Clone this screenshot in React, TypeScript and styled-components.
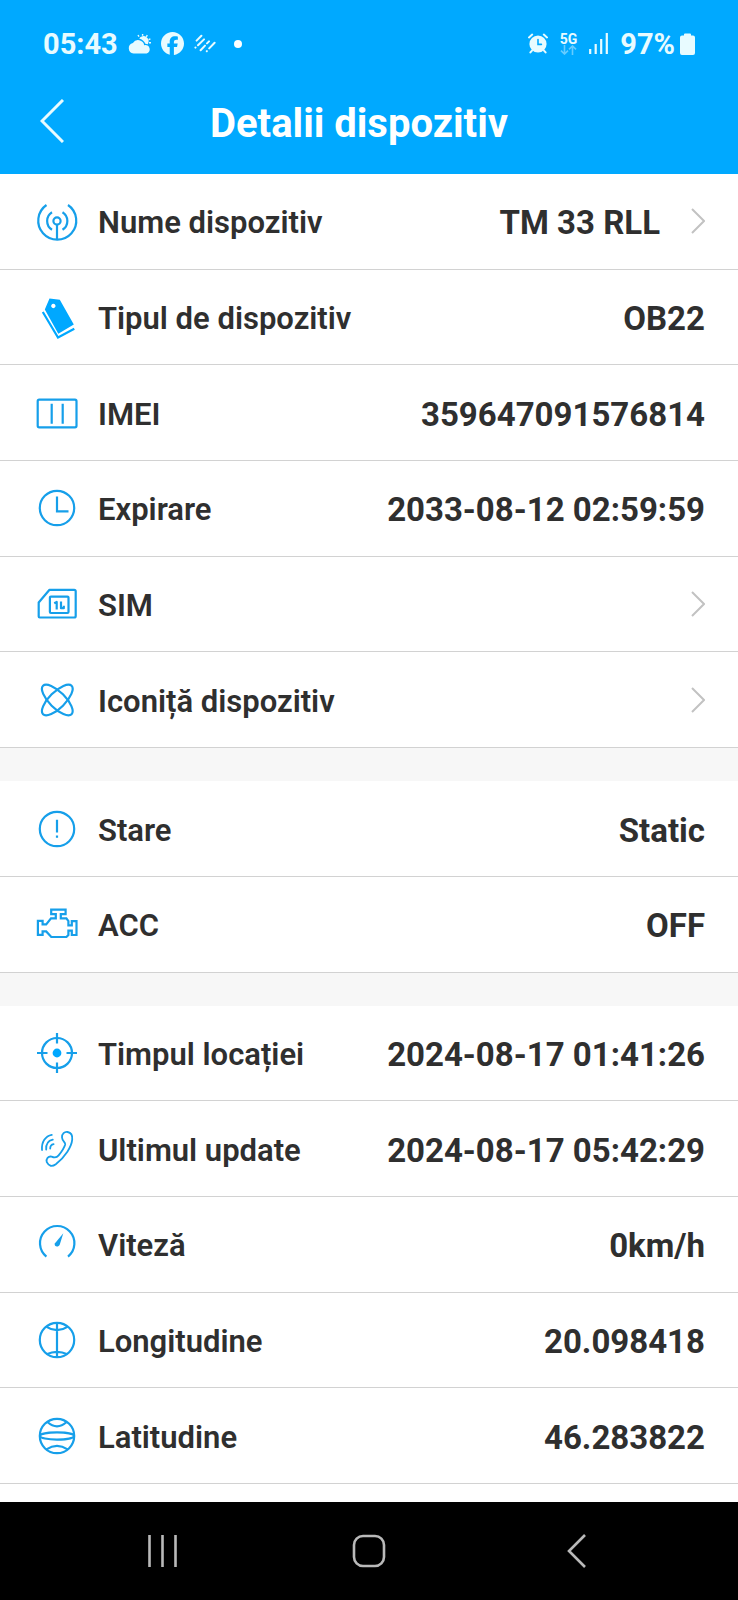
import React from "react";
import styled, { createGlobalStyle, css } from "styled-components";

const GlobalStyle = createGlobalStyle`
  *, *::before, *::after { box-sizing: border-box; }
  body {
    margin: 0;
    background: #ffffff;
    color: #2f2f2f;
    font-family: Roboto, "Noto Sans", sans-serif;
  }
  button { font: inherit; color: inherit; background: none; border: 0; padding: 0; cursor: pointer; }
`;

const Screen = styled.div`
  display: flex;
  flex-direction: column;
  min-height: 100vh;
`;

const Header = styled.header`
  background: #00a9ff;
  color: #ffffff;
`;

const StatusBar = styled.div`
  display: flex;
  align-items: center;
  justify-content: space-between;
  height: 72px;
  padding: 15px 43px 0;
`;

const StatusGroup = styled.div<{ $gap: number }>`
  display: flex;
  align-items: center;
  gap: ${(p) => p.$gap}px;
  color: #e8fbff;
`;

const StatusText = styled.span`
  font-size: 29px;
  line-height: 32px;
  font-weight: 700;
`;

const Network = styled.span`
  display: flex;
  flex-direction: column;
  align-items: center;
  font-size: 14px;
  line-height: 12px;
  font-weight: 700;
`;

const Battery = styled.span`
  display: flex;
  align-items: center;
  gap: 5px;
`;

const TitleBar = styled.div`
  display: flex;
  align-items: center;
  height: 102px;
`;

const BackButton = styled.button`
  display: flex;
  justify-content: center;
  flex: 0 0 104px;
  padding-bottom: 4px;
`;

const Title = styled.h1`
  flex: 1;
  margin: 0;
  padding: 2px 124px 0 0;
  text-align: center;
  font-size: 40px;
  line-height: 48px;
  font-weight: 700;
  white-space: nowrap;
`;

const Main = styled.main`
  display: flex;
  flex-direction: column;
  flex: 1;
  gap: 33px;
  padding-bottom: 18px;
  background: linear-gradient(to top, #ffffff 18px, #f7f7f7 18px);
`;

const Section = styled.ul<{ $rows: number }>`
  display: flex;
  flex-direction: column;
  flex: ${(p) => p.$rows} 0 auto;
  margin: 0;
  padding: 0;
  list-style: none;
  background: #ffffff;
`;

const Item = styled.li`
  display: flex;
  flex: 1 0 95px;
  border-bottom: 1px solid #d2d2d2;
`;

const rowStyle = css`
  display: flex;
  align-items: center;
  width: 100%;
  padding: 0 33px 0 37px;
`;

const Row = styled.div`
  ${rowStyle}
`;

const RowButton = styled.button`
  && { ${rowStyle} }
  text-align: left;
`;

const RowIcon = styled.svg`
  flex: none;
  width: 40px;
  height: 40px;
  overflow: visible;
  fill: none;
  stroke: #169fea;
  stroke-width: 2.2;
  stroke-linejoin: round;
`;

const Label = styled.span`
  flex: 1;
  margin-left: 21px;
  padding-top: 4px;
  font-size: 31px;
  line-height: 36px;
  font-weight: 600;
  white-space: nowrap;
`;

const Value = styled.span`
  padding-top: 4px;
  font-size: 33px;
  line-height: 40px;
  font-weight: 700;
  white-space: nowrap;
`;

const Chevron = styled.svg`
  flex: none;
  width: 14px;
  height: 26px;
  margin-left: 31px;
  fill: none;
  stroke: #c2c2c2;
  stroke-width: 2;
`;

const NavBar = styled.nav`
  display: flex;
  justify-content: center;
  height: 98px;
  background: #000000;
`;

const NavButton = styled.button`
  display: flex;
  align-items: center;
  justify-content: center;
  flex: 0 0 28%;
`;

const NavIcon = styled.svg`
  width: 34px;
  height: 34px;
  fill: none;
  stroke: #b9b9b9;
  stroke-width: 2.6;
`;

const icons: Record<string, React.ReactNode> = {
  antenna: (
    <>
      <path d="M9.5 4A19 19 0 1 0 31 4" />
      <path d="M15 11.2A10.4 10.4 0 0 0 15 28.8M25.5 11.2A10.4 10.4 0 0 1 25.5 28.8" />
      <circle cx="20" cy="20" r="3.6" />
      <path d="M20 23.6V38" />
    </>
  ),
  tag: (
    <>
      <path
        d="M12.5 1.5 22.8 2.8 36.8 27.6 21.3 36.8 7.8 12.6ZM16.3 6.8a2.2 2.2 0 1 0 .1 0Z"
        fill="#00a8ff"
        fillRule="evenodd"
        stroke="none"
      />
      <path d="M5.8 15 21 40.5 37.3 31.8" strokeLinejoin="miter" stroke="#00a8ff" />
    </>
  ),
  imei: (
    <>
      <rect x="0.7" y="6.7" width="38.8" height="27.6" rx="1.5" />
      <path d="M14.7 10.7V30.7M25.7 10.7V30.7" />
    </>
  ),
  clock: (
    <>
      <circle cx="20" cy="20" r="17.2" />
      <path d="M20 8.5V23.4H31.5" strokeLinejoin="miter" />
    </>
  ),
  sim: (
    <>
      <path d="M1.7 32.5V18.5L12.5 5.8H37.2Q38.7 5.8 38.7 7.3V32Q38.7 33.5 37.2 33.5H2.7Q1.7 33.5 1.7 32.5Z" />
      <rect x="12.9" y="12.6" width="18.6" height="16.4" rx="1" />
      <path d="M17.2 19.2 19.7 18V25.5M24 17.5V24.2H26.8V21.8" />
    </>
  ),
  orbit: (
    <>
      <ellipse cx="20.3" cy="20" rx="20.2" ry="8" transform="rotate(45 20.3 20)" />
      <ellipse cx="20.3" cy="20" rx="20.2" ry="8" transform="rotate(-45 20.3 20)" />
    </>
  ),
  alert: (
    <>
      <circle cx="20" cy="20" r="17.2" />
      <path d="M20 10.7V23.5M20 26.6V28.8" />
    </>
  ),
  engine: (
    <path
      strokeLinejoin="miter"
      d="M14.2 5.6H28.6V10.2H23.8V14.4H29.4L31.4 17V21.4H34.8V17.2H39.5V31H34.8V26.6H31.4V31L29.4 33H14.3L9.2 27.4H5.6V30.8H0.9V16.8H5.6V20.4H9.2L14 14.4H18.8V10.2H14.2Z"
    />
  ),
  target: (
    <>
      <circle cx="20" cy="20" r="15" />
      <path d="M20 0V10.5M20 29.5V40M0 20H10.5M29.5 20H40" />
      <circle cx="20" cy="20" r="4.4" fill="#00a8ff" stroke="none" />
    </>
  ),
  phone: (
    <g strokeWidth="1.8" strokeLinecap="round">
      <path d="M25 8.5C24.7 5 27.6 2.4 30.6 3C34.2 3.7 35.7 6 35.2 10.6C34.6 17.5 28.4 27.6 18.8 35.2C15 38 11.8 37.2 9.8 33.2C8.8 29.8 11.2 27 14.6 27.6C17.8 29 19.6 29 21.6 26.4C24.6 22.6 27.3 18.6 28.2 15.4C28.4 12.8 25.3 12.4 25 8.5Z" />
      <path d="M5 21C4.4 13 8.4 7 14.8 5.8M9.2 20.6C8.8 15.4 11.4 11.6 15.8 10.6M13.2 19.6C13.2 17.2 14.4 15.6 16.6 15.2" />
    </g>
  ),
  speed: (
    <>
      <path d="M9.4 32.6A17.2 17.2 0 1 1 31 32.6" />
      <path d="M26.3 9.2 22.8 20.4C21.4 23.8 16.8 22.6 17.8 19.4Z" fill="#169fea" stroke="none" />
    </>
  ),
  longitude: (
    <>
      <circle cx="20" cy="20" r="17.2" />
      <path d="M20 3V37M9.6 6.8Q20 13.6 30.4 6.8M9.6 34.2Q20 29.4 30.4 34.2" />
    </>
  ),
  latitude: (
    <>
      <circle cx="20" cy="20" r="17.2" />
      <ellipse cx="20" cy="20" rx="17" ry="3.6" />
      <path d="M10.4 6Q20 14.6 29.6 6M9.4 33.4Q20 26.4 30.6 33.4" />
    </>
  ),
};

type Entry = { icon: string; label: string; value?: string; opens?: boolean };

const sections: Entry[][] = [
  [
    { icon: "antenna", label: "Nume dispozitiv", value: "TM 33 RLL", opens: true },
    { icon: "tag", label: "Tipul de dispozitiv", value: "OB22" },
    { icon: "imei", label: "IMEI", value: "359647091576814" },
    { icon: "clock", label: "Expirare", value: "2033-08-12 02:59:59" },
    { icon: "sim", label: "SIM", opens: true },
    { icon: "orbit", label: "Iconiță dispozitiv", opens: true },
  ],
  [
    { icon: "alert", label: "Stare", value: "Static" },
    { icon: "engine", label: "ACC", value: "OFF" },
  ],
  [
    { icon: "target", label: "Timpul locației", value: "2024-08-17 01:41:26" },
    { icon: "phone", label: "Ultimul update", value: "2024-08-17 05:42:29" },
    { icon: "speed", label: "Viteză", value: "0km/h" },
    { icon: "longitude", label: "Longitudine", value: "20.098418" },
    { icon: "latitude", label: "Latitudine", value: "46.283822" },
  ],
];

function DetailRow({ icon, label, value, opens }: Entry) {
  const content = (
    <>
      <RowIcon viewBox="0 0 40 40" aria-hidden="true">{icons[icon]}</RowIcon>
      <Label>{label}</Label>
      {value && <Value>{value}</Value>}
      {opens && (
        <Chevron viewBox="0 0 14 26" aria-hidden="true">
          <path d="M1 1 13 13 1 25" />
        </Chevron>
      )}
    </>
  );
  return <Item>{opens ? <RowButton type="button">{content}</RowButton> : <Row>{content}</Row>}</Item>;
}

function WeatherIcon() {
  return (
    <svg width="23" height="20" viewBox="0 0 23 20" fill="currentColor" aria-hidden="true">
      <path d="M5.5 19.5a5.4 5.4 0 0 1-.6-10.6A6.2 6.2 0 0 1 16.2 11.2a4.3 4.3 0 0 1 2.4 8.3Z" />
      <path d="M11.2 4.4a5 5 0 0 1 8.6 5.8l-2.4-.5c-1-2.6-3.4-4.4-6.2-5.3Z" />
      <path
        d="M11 2.6 10 1M14.6 1.8V0M18.3 2.8 19.3 1.2M20.6 5.6 22.4 4.8M21 8.8H23"
        stroke="currentColor"
        strokeWidth="1.4"
      />
    </svg>
  );
}

function FacebookIcon() {
  return (
    <svg width="23" height="23" viewBox="0 0 24 24" fill="currentColor" aria-hidden="true">
      <path d="M24 12.07C24 5.4 18.63 0 12 0S0 5.4 0 12.07c0 5.66 3.87 10.4 9.1 11.7v-8.03H6.63v-3.67H9.1v-1.58c0-4.1 1.85-6 5.87-6 .76 0 2.08.15 2.62.3v3.34c-.29-.03-.78-.05-1.39-.05-1.97 0-2.73.75-2.73 2.7v1.29h3.93l-.67 3.67h-3.26v8.3C19.4 23.32 24 18.24 24 12.07Z" />
    </svg>
  );
}

function StripesIcon() {
  return (
    <svg width="22" height="19" viewBox="0 0 22 19" stroke="currentColor" strokeWidth="2" strokeLinecap="round" aria-hidden="true">
      <path d="M2.6 6.6 7.4 1.8M1.4 13.6 1.5 13.5M4 11.2 10 5.4M6.6 16.2 11 11.6M13 9.4 15 7.4M12.8 17.2 12.9 17.1M15.2 14.4 20.6 8.8" />
    </svg>
  );
}

function DotIcon() {
  return (
    <svg width="8" height="8" viewBox="0 0 8 8" fill="#ffffff" aria-hidden="true">
      <circle cx="4" cy="4" r="4" />
    </svg>
  );
}

function AlarmIcon() {
  return (
    <svg width="20" height="21" viewBox="0 0 20 21" fill="none" stroke="currentColor" strokeWidth="2" strokeLinecap="round" aria-hidden="true">
      <circle cx="10" cy="11" r="8.6" fill="currentColor" stroke="none" />
      <path d="M1 4.4 4.2 1.6M19 4.4 15.8 1.6M4 17.6 2.4 19.4M16 17.6 17.6 19.4" />
      <path d="M10 6.6V11.4H13.4" stroke="#00a9ff" strokeWidth="1.6" />
    </svg>
  );
}

function DataArrows() {
  return (
    <svg width="17" height="10" viewBox="0 0 17 10" fill="none" stroke="#66ccff" strokeWidth="1.6" aria-hidden="true">
      <path d="M4.5 0V9M1 5.6 4.5 9 8 5.6M12.5 10V1M9 4.4 12.5 1 16 4.4" />
    </svg>
  );
}

function SignalIcon() {
  return (
    <svg width="19" height="21" viewBox="0 0 19 21" stroke="currentColor" strokeWidth="2.2" aria-hidden="true">
      <path d="M1.2 16V21M6.7 11V21M12.2 6V21M17.8 0V21" />
    </svg>
  );
}

function BatteryIcon() {
  return (
    <svg width="15" height="22" viewBox="0 0 15 22" fill="currentColor" aria-hidden="true">
      <path d="M4 2.5V1.5Q4 .5 5 .5H10Q11 .5 11 1.5V2.5H13Q15 2.5 15 4.5V20Q15 22 13 22H2Q0 22 0 20V4.5Q0 2.5 2 2.5Z" />
    </svg>
  );
}

export default function App() {
  return (
    <Screen>
      <GlobalStyle />
      <Header>
        <StatusBar>
          <StatusGroup $gap={18}>
            <StatusGroup $gap={10}>
              <StatusText>05:43</StatusText>
              <WeatherIcon />
              <FacebookIcon />
              <StripesIcon />
            </StatusGroup>
            <DotIcon />
          </StatusGroup>
          <StatusGroup $gap={12}>
            <AlarmIcon />
            <Network>
              5G
              <DataArrows />
            </Network>
            <SignalIcon />
            <Battery>
              <StatusText>97%</StatusText>
              <BatteryIcon />
            </Battery>
          </StatusGroup>
        </StatusBar>
        <TitleBar>
          <BackButton type="button" aria-label="Înapoi">
            <svg width="24" height="44" viewBox="0 0 24 44" fill="none" stroke="#e8fbff" strokeWidth="3" aria-hidden="true">
              <path d="M23 1 2 22 23 43" />
            </svg>
          </BackButton>
          <Title>Detalii dispozitiv</Title>
        </TitleBar>
      </Header>
      <Main>
        {sections.map((rows) => (
          <Section key={rows[0].label} $rows={rows.length}>
            {rows.map((row) => (
              <DetailRow key={row.label} {...row} />
            ))}
          </Section>
        ))}
      </Main>
      <NavBar aria-label="Navigare sistem">
        <NavButton type="button" aria-label="Recente">
          <NavIcon viewBox="0 0 34 34"><path d="M4.5 1V33M17.5 1V33M30.5 1V33" /></NavIcon>
        </NavButton>
        <NavButton type="button" aria-label="Acasă">
          <NavIcon viewBox="0 0 34 34"><rect x="2" y="2" width="30" height="30" rx="9" /></NavIcon>
        </NavButton>
        <NavButton type="button" aria-label="Înapoi la ecranul anterior">
          <NavIcon viewBox="0 0 34 34"><path d="M26 1 10 17 26 33" /></NavIcon>
        </NavButton>
      </NavBar>
    </Screen>
  );
}
